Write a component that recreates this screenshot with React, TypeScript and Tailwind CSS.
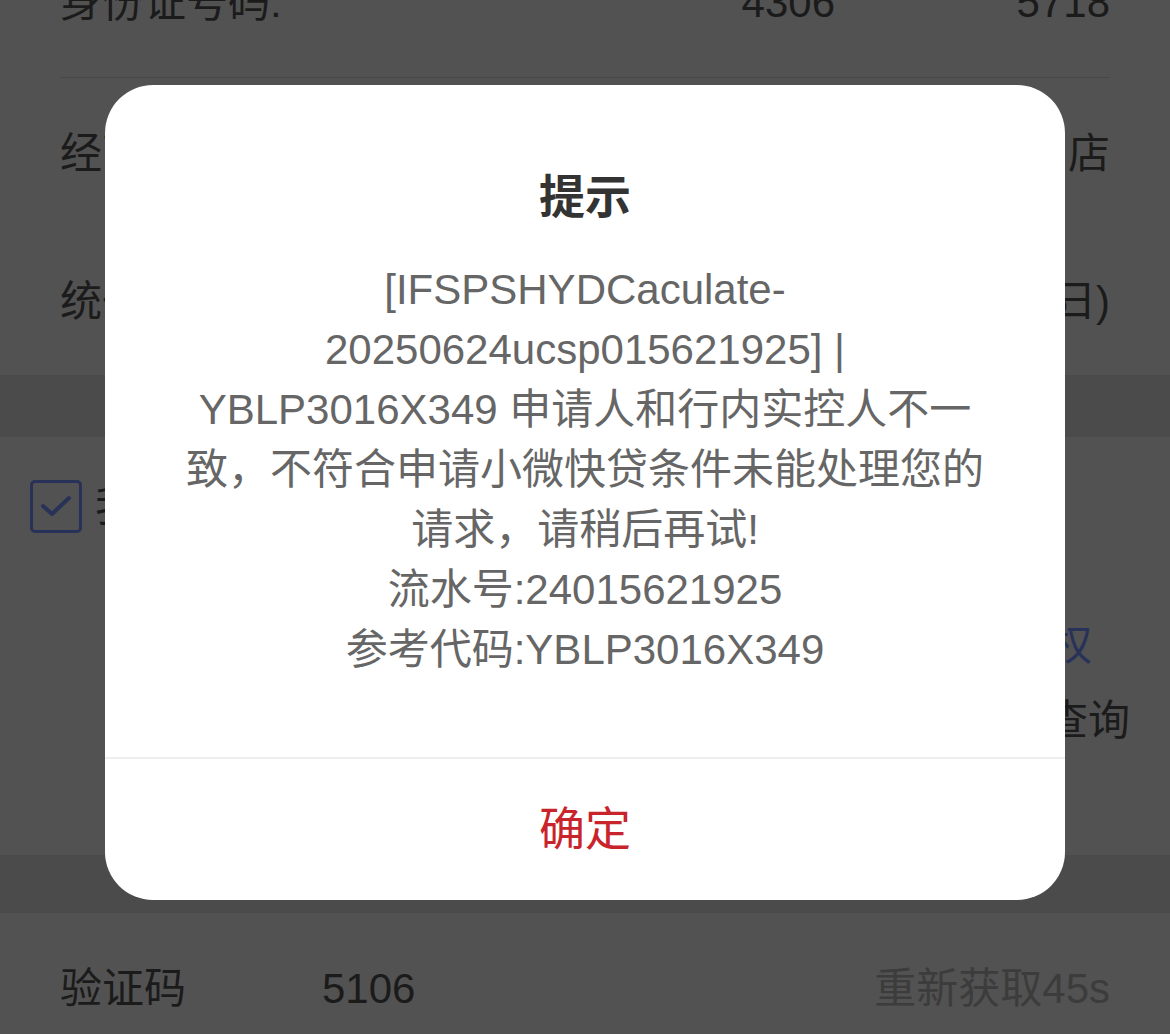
import React from "react";

const FONT = { fontFamily: '"Liberation Sans", "Noto Sans CJK SC", sans-serif' };

export default function App() {
  const body = [
    "[IFSPSHYDCaculate-",
    "20250624ucsp015621925] |",
    "YBLP3016X349 申请人和行内实控人不一",
    "致，不符合申请小微快贷条件未能处理您的",
    "请求，请稍后再试!",
    "流水号:24015621925",
    "参考代码:YBLP3016X349",
  ];
  return (
    <div className="relative h-[1034px] w-[1170px] overflow-hidden bg-[#525252]" style={FONT}>
      {/* dimmed page underneath */}
      <div className="-mt-[72px] flex flex-col">
        <div className="flex flex-col">
          <div className="flex h-[149px] items-center px-[60px] text-[42px] text-[#1b1b1b]">
            <span className="flex-1">身份证号码:</span>
            <span className="w-[275px]">4306</span>
            <span>5718</span>
          </div>
          <div className="mx-[60px] h-px bg-[#484848]" />
          <div className="flex h-[150px] items-center justify-between px-[60px] text-[42px] text-[#1b1b1b]">
            <span>经营实体名称</span>
            <span>长沙市某某便利店</span>
          </div>
          <div className="flex h-[147px] items-center justify-between px-[60px] text-[42px] text-[#1b1b1b]">
            <span>统一社会信用代码</span>
            <span className="flex">
              <span>个体5</span>
              <span className="-ml-[14px]">日)</span>
            </span>
          </div>
        </div>
        <div className="h-[62px] bg-[#4b4b4b]" />
        <div className="flex h-[418px] flex-col pt-[42px] text-[42px] text-[#1b1b1b]">
          <div className="flex h-[54px] items-center gap-[13px] pl-[30px]">
            <div className="flex h-[53px] w-[52px] items-center justify-center rounded-[5px] border-[3px] border-[#283158]">
              <svg width="34" height="26" viewBox="0 0 34 26" fill="none">
                <path d="M4 13 L13 21 L30 5" stroke="#283158" strokeWidth="4" strokeLinecap="round" strokeLinejoin="round" />
              </svg>
            </div>
            <span>我已阅读并同意相关协议</span>
          </div>
          <div className="mt-[82px] flex h-[60px] items-center justify-end pr-[78px] text-[#283158]">
            <span>《征信查询授权书》及授权</span>
          </div>
          <div className="mt-[15px] flex h-[60px] items-center justify-between pl-[98px] pr-[40px]">
            <span>：本人同意贵行进行征信</span>
            <span>查询</span>
          </div>
          <div className="flex h-[60px] items-center pl-[98px]">
            <span>：相关信息</span>
          </div>
        </div>
        <div className="h-[58px] bg-[#4b4b4b]" />
        <div className="flex h-[150px] items-center px-[60px] text-[42px]">
          <span className="w-[262px] text-[#1b1b1b]">验证码</span>
          <span className="flex-1 text-[#1b1b1b]">5106</span>
          <span className="text-[#3c3c3c]">重新获取45s</span>
        </div>
      </div>

      {/* modal dialog */}
      <div className="absolute left-[105px] top-[85px] flex h-[815px] w-[960px] flex-col rounded-[48px] bg-white">
        <div className="flex flex-1 flex-col items-center pt-[82px]">
          <div className="text-[46px] font-bold leading-[60px] text-[#333333]">提示</div>
          <div className="mt-[33px] flex flex-col items-center text-[42px] leading-[60px] text-[#666666]">
            {body.map((l, i) => (
              <span key={i} className="whitespace-pre">{l}</span>
            ))}
          </div>
        </div>
        <div className="h-[2px] bg-[#eeeeee]" />
        <div className="flex h-[141px] items-center justify-center text-[46px] text-[#c9232b]">确定</div>
      </div>
    </div>
  );
}
